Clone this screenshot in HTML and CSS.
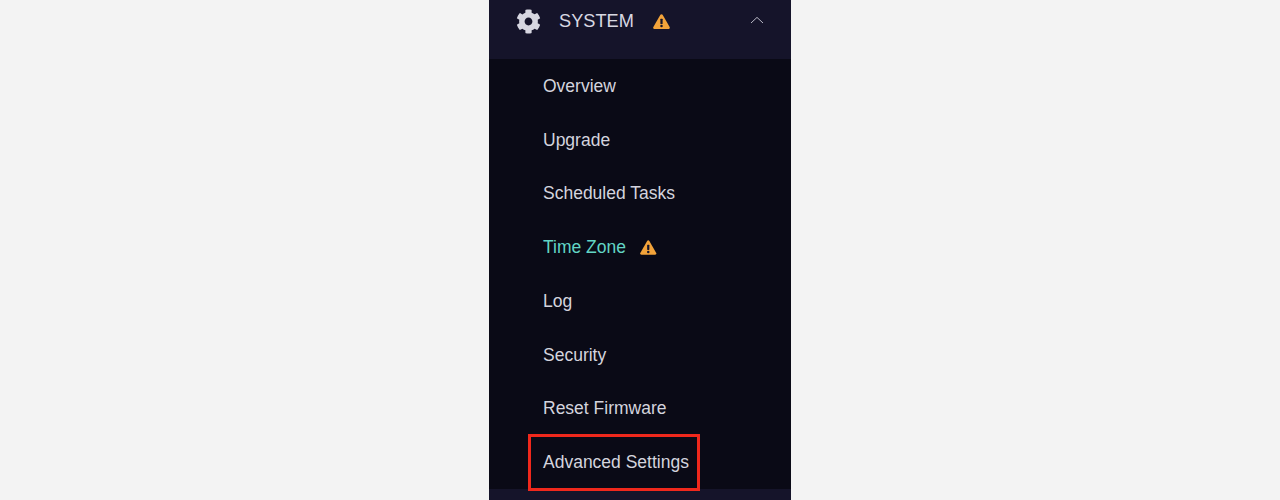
FILE: index.html
```html
<!DOCTYPE html>
<html lang="en">
<head>
<meta charset="utf-8">
<title>System menu</title>
<link rel="stylesheet" href="styles.css">
</head>
<body>
<nav class="sidebar">
  <div class="header">
    <svg class="gear" viewBox="0 0 512 512" aria-hidden="true"><path d="M487.4 315.7l-42.6-24.6c4.3-23.2 4.3-47 0-70.2l42.6-24.6c4.9-2.8 7.1-8.6 5.5-14-11.1-35.6-30-67.8-54.7-94.6-3.8-4.1-10-5.1-14.8-2.3L380.8 110c-17.9-15.4-38.5-27.3-60.8-35.1V25.8c0-5.6-3.9-10.5-9.4-11.7-36.7-8.2-74.3-7.8-109.2 0-5.5 1.2-9.4 6.1-9.4 11.7V75c-22.2 7.9-42.8 19.8-60.8 35.1L88.7 85.5c-4.9-2.8-11-1.9-14.8 2.3-24.7 26.7-43.6 58.9-54.7 94.6-1.7 5.4.6 11.2 5.5 14L67.3 221c-4.3 23.2-4.3 47 0 70.2l-42.6 24.6c-4.9 2.8-7.1 8.6-5.5 14 11.1 35.6 30 67.8 54.7 94.6 3.8 4.1 10 5.1 14.8 2.3l42.6-24.6c17.9 15.4 38.5 27.3 60.8 35.1v49.2c0 5.6 3.9 10.5 9.4 11.7 36.7 8.2 74.3 7.8 109.2 0 5.5-1.2 9.4-6.1 9.4-11.7v-49.2c22.2-7.9 42.8-19.8 60.8-35.1l42.6 24.6c4.9 2.8 11 1.9 14.8-2.3 24.7-26.7 43.6-58.9 54.7-94.6 1.5-5.5-.7-11.3-5.6-14.1zM256 336c-44.1 0-80-35.9-80-80s35.9-80 80-80 80 35.9 80 80-35.9 80-80 80z"/></svg>
    <span class="title">SYSTEM</span>
    <svg class="warn warn-head" viewBox="0 0 18 16" aria-hidden="true"><path class="warn-bg" d="M9 .2c.5 0 .9.3 1.2.7l7.5 13c.5.9-.1 2-1.2 2h-15c-1.1 0-1.7-1.1-1.2-2l7.500-13C8.100.500 8.500.2 9 .2z"/><rect class="warn-mark" x="7.8" y="5" width="2.4" height="5.6" rx=".6"/><circle class="warn-mark" cx="9" cy="12.9" r="1.35"/></svg>
    <svg class="chevron" viewBox="0 0 14 8" aria-hidden="true"><path d="M1 7l6-5.6L13 7"/></svg>
  </div>
  <ul class="menu">
    <li class="item">Overview</li>
    <li class="item">Upgrade</li>
    <li class="item">Scheduled Tasks</li>
    <li class="item active">Time Zone
      <svg class="warn warn-item" viewBox="0 0 18 16" aria-hidden="true"><path class="warn-bg" d="M9 .2c.5 0 .9.3 1.2.7l7.5 13c.5.9-.1 2-1.2 2h-15c-1.1 0-1.7-1.1-1.2-2l7.500-13C8.100.500 8.500.2 9 .2z"/><rect class="warn-mark" x="7.8" y="5" width="2.4" height="5.6" rx=".6"/><circle class="warn-mark" cx="9" cy="12.9" r="1.35"/></svg>
    </li>
    <li class="item">Log</li>
    <li class="item">Security</li>
    <li class="item">Reset Firmware</li>
    <li class="item highlighted">Advanced Settings</li>
  </ul>
  <div class="footer"></div>
</nav>
</body>
</html>
```
FILE: styles.css
```css
*, *::after { box-sizing: border-box; }
html, body { height: 100%; }
body {
  margin: 0;
  background: #f3f3f3;
  display: flex;
  justify-content: center;
  overflow: hidden;
  font-family: "Liberation Sans", Arial, sans-serif;
}
.sidebar {
  width: 302px;
  height: 500px;
  background: #0a0a16;
  display: flex;
  flex-direction: column;
}
.header {
  height: 59px;
  flex: none;
  background: #15142a;
  display: flex;
  align-items: center;
  padding: 0 0 17px 27px;
  color: #d8d8e2;
  position: relative;
}
.gear { width: 25px; height: 25px; fill: #d6d6e0; flex: none; }
.title { font-size: 18.2px; margin-left: 18px; line-height: 1; }
.warn { flex: none; }
.warn-bg { fill: #f2a33a; }
.warn-mark { fill: #15142a; }
.warn-head { width: 17px; height: 15px; margin-left: 19px; margin-top: 1px; }
.chevron {
  width: 14px; height: 8px; margin-left: auto; margin-right: 27px; margin-top: -3px;
  fill: none; stroke: #b9b9c6; stroke-width: 1;
}
.menu {
  list-style: none;
  margin: 0;
  padding: 0;
  display: grid;
  grid-auto-rows: 53.75px;
}
.item {
  display: flex;
  align-items: center;
  padding: 1px 0 0 54px;
  font-size: 17.5px;
  color: #d4d4de;
  position: relative;
}
.active { color: #62d5c5; }
.warn-item { width: 16.500px; height: 15px; margin-left: 14px; }
.highlighted::after {
  content: "";
  position: absolute;
  left: 39px;
  top: -1px;
  width: 172px;
  height: 57px;
  border: 3px solid #f0281c;
}
.footer { flex: 1; background: #15142a; }
```
